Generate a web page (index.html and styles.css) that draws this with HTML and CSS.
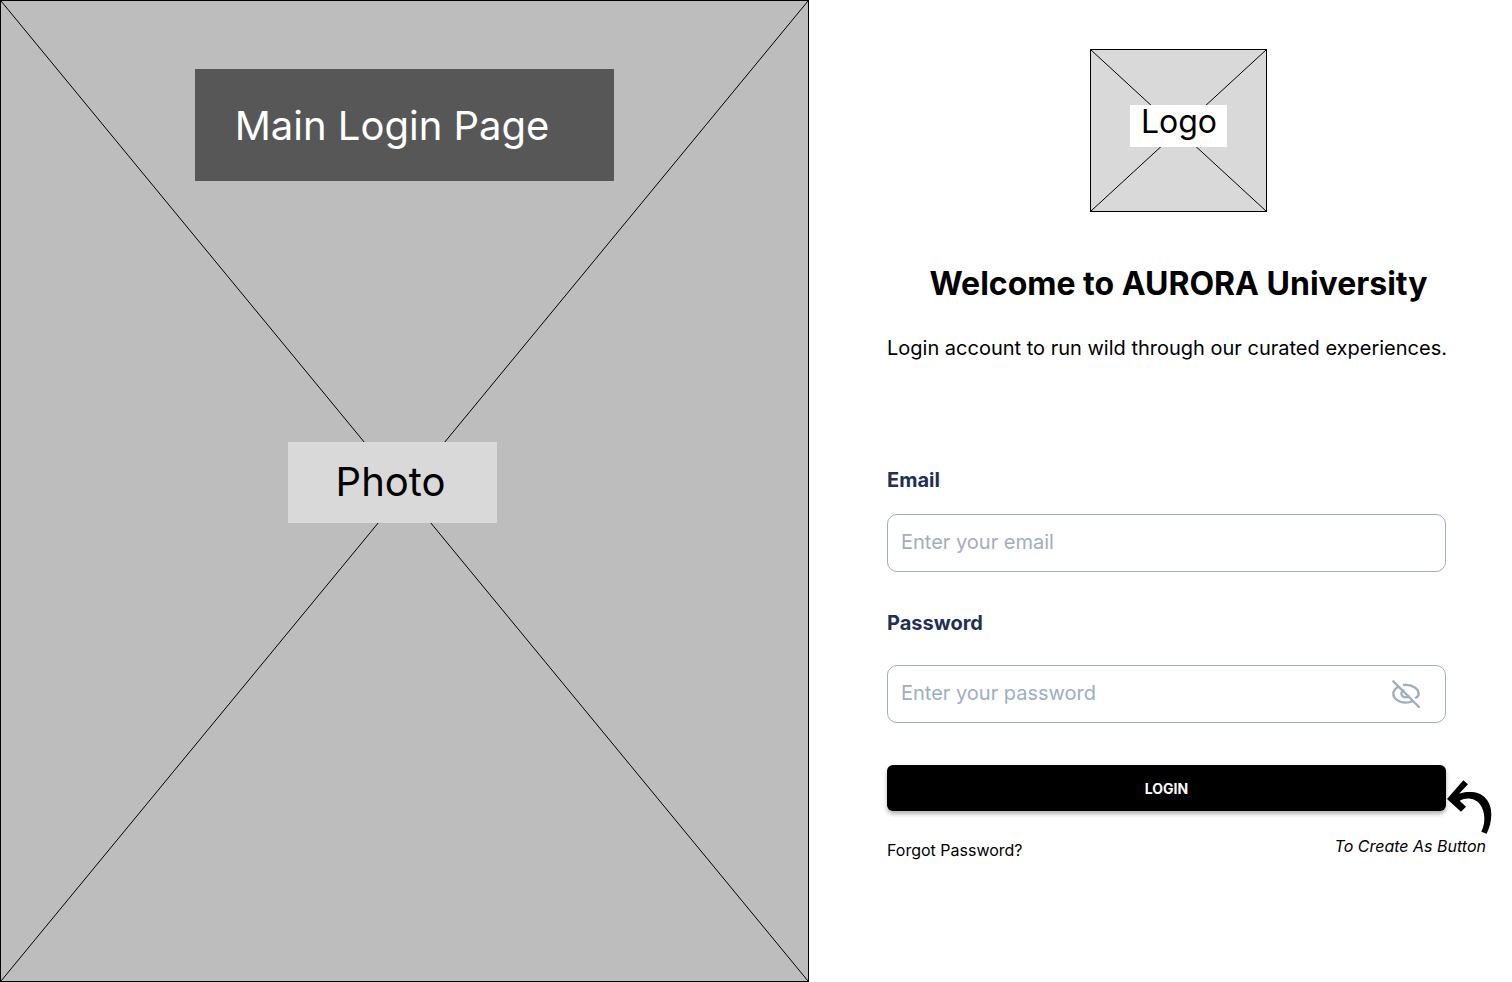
FILE: index.html
```html
<!DOCTYPE html>
<html lang="en">
<head>
<meta charset="utf-8">
<title>Login - AURORA University</title>
<link rel="stylesheet" href="styles.css">
</head>
<body>
<main class="page">
  <section class="photo">
    <svg class="cross" viewBox="0 0 100 100" preserveAspectRatio="none" aria-hidden="true"><path d="M0 0 100 100M100 0 0 100"/></svg>
    <h2 class="photo-title">Main Login Page</h2>
    <p class="photo-label">Photo</p>
  </section>
  <section class="panel">
    <header class="intro">
      <div class="logo">
        <svg class="cross" viewBox="0 0 100 100" preserveAspectRatio="none" aria-hidden="true"><path d="M0 0 100 100M100 0 0 100"/></svg>
        <span class="logo-label">Logo</span>
      </div>
      <h1 class="heading">Welcome to AURORA University</h1>
    </header>
    <p class="subtitle">Login account to run wild through our curated experiences.</p>
    <form class="form">
      <label class="label" for="email">Email</label>
      <input class="input" id="email" type="email" placeholder="Enter your email">
      <label class="label label-password" for="password">Password</label>
      <div class="password">
        <input class="input" id="password" type="password" placeholder="Enter your password">
        <button class="toggle" type="button" aria-label="Show password">
          <svg viewBox="0 0 84 84" aria-hidden="true"><path d="M4 4 81 81M19 20C9 26 4 33 4 41C4 55 20 68 41 68C50 68 57 66 63 63M36 15C60 13 80 26 80 41C80 46 77 50 72 53M34 31C28 34 27 41 30 46C34 53 43 54 50 48"/></svg>
        </button>
      </div>
      <div class="submit">
        <button class="login" type="submit">LOGIN</button>
        <svg class="arrow" viewBox="0 0 135 162" aria-hidden="true"><path d="M0 57 49 1 63 13 36 41C48 36 60 35 75 36C115 39 133 70 133 103C133 125 127 145 119 161L103 155C111 140 114 120 111 103C107 77 93 59 70 56C58 55 48 57 38 62L57 80 42 95Z"/></svg>
      </div>
    </form>
    <footer class="foot">
      <a class="forgot" href="#">Forgot Password?</a>
      <em class="note">To Create As Button</em>
    </footer>
  </section>
</main>
</body>
</html>
```
FILE: styles.css
```css
* { box-sizing: border-box; }
body { margin: 0; background: #fff; color: #000; font-family: Inter, "Liberation Sans", sans-serif; }
h1, h2, p { margin: 0; font-weight: 400; }
.page { display: grid; grid-template-columns: minmax(0, 809fr) minmax(0, 703fr); min-height: 100vh; }
.photo { position: relative; display: flex; flex-direction: column; align-items: center; padding-top: 68px; background: #bdbdbd; border: 1px solid #000; }
.cross { position: absolute; inset: 0; width: 100%; height: 100%; fill: none; stroke: #000; }
.cross path { vector-effect: non-scaling-stroke; stroke-width: 1px; }
.photo-title { position: relative; width: 52%; padding: 33px 40px 31px; background: #575757; color: #fff; font-size: 40px; line-height: 48px; }
.photo-label { position: relative; width: 26%; margin: 261px 24px 0 0; padding: 16px 48px 17px; background: #d9d9d9; font-size: 40px; line-height: 48px; }
.panel { padding: 49px 66px 48px 78px; }
.intro { display: flex; flex-direction: column; align-items: center; padding-left: 24px; }
.logo { position: relative; width: 177px; height: 163px; display: grid; place-items: center; background: #d9d9d9; border: 1px solid #000; }
.logo-label { position: relative; margin-top: -10px; padding: 0 10px 8px 11px; background: #fff; font-size: 32px; line-height: 34px; }
.heading { margin-top: 52px; font-size: 32px; line-height: 40px; font-weight: 700; white-space: nowrap; }
.subtitle { margin-top: 32px; font-size: 20px; line-height: 24px; white-space: nowrap; }
.form { display: flex; flex-direction: column; margin-top: 108px; }
.label { color: #1e3054; font-size: 20px; line-height: 24px; font-weight: 700; }
.label-password { margin-top: 39px; }
.input { width: 100%; height: 58px; margin-top: 22px; padding: 0 13px 3px; border: 1px solid #a0aec0; border-radius: 10px; background: #fff; color: #1e3054; font: inherit; font-size: 20px; }
.input::placeholder { color: #a0aec0; opacity: 1; }
.password { position: relative; margin-top: 30px; }
.password .input { display: block; margin-top: 0; padding-right: 64px; }
.toggle { position: absolute; top: 15px; right: 26px; width: 28px; height: 28px; padding: 0; border: 0; background: none; }
.toggle svg { display: block; width: 28px; height: 28px; fill: none; stroke: #a0aec0; stroke-width: 7; stroke-linecap: round; }
.submit { position: relative; margin-top: 42px; }
.login { display: block; width: 100%; height: 46px; border: 0; border-radius: 6px; background: #000; color: #fff; font: inherit; font-size: 14px; font-weight: 700; box-shadow: 0 3px 4px rgba(0, 0, 0, 0.3); }
.arrow { position: absolute; top: 15px; left: 100%; margin-left: 1px; width: 45px; height: 54px; }
.foot { display: flex; justify-content: space-between; margin: 25px -40px 0 0; font-size: 16px; line-height: 20px; }
.forgot { margin-top: 4px; color: inherit; text-decoration: none; }
.note { font-style: oblique 10deg; }
```
